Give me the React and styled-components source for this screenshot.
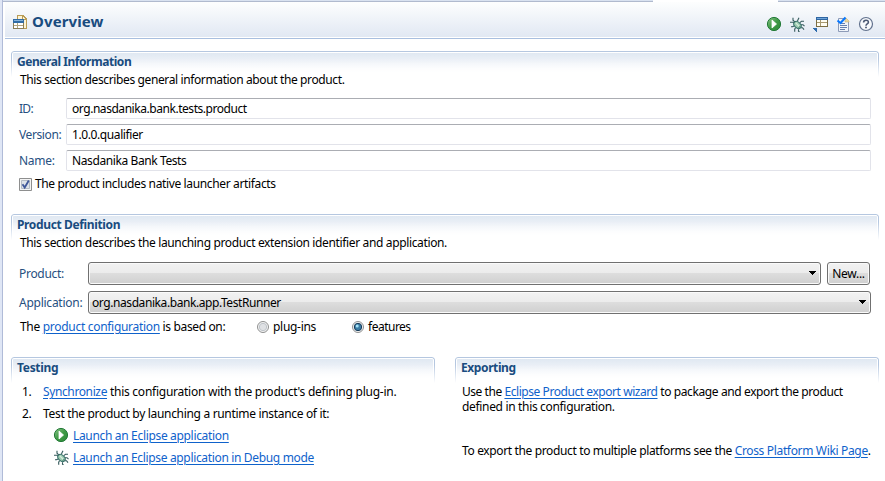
import React from "react";
import styled, { createGlobalStyle } from "styled-components";

const GlobalStyle = createGlobalStyle`
  * { box-sizing: border-box; }
  html, body { margin: 0; padding: 0; background: #fff; overflow: hidden; }
`;

const Editor = styled.div`
  display: flex;
  width: 885px;
  height: 481px;
  overflow: hidden;
  background: #fff;
  color: #000;
  font: 12px/16px "Noto Sans", "Open Sans", sans-serif;
`;

const Gutter = styled.div`
  flex: none;
  width: 3px;
  background: #dfe6f5;
  border-right: 1px solid #b0bbd8;
`;

const Page = styled.main`
  flex: 1;
  min-width: 0;
`;

const TabEdge = styled.div`
  display: flex;
  justify-content: space-between;
  height: 2px;
`;

const TabLine = styled.div`
  width: ${(p) => p.$width}px;
  height: 2px;
  background: #d9e2f0;
  border-bottom: 1px solid #b0bace;
`;

const Header = styled.header`
  display: flex;
  align-items: flex-start;
  height: 37px;
  margin-left: 2px;
  padding: 13px 11px 0 7px;
  background: linear-gradient(#fdfefe, #e1e8f3) 0 0 / 100% 35px no-repeat #fff;
  border-bottom: 1px solid #a9bfdf;
`;

const Title = styled.h1`
  flex: 1;
  margin: -4px 0 0 5px;
  font-size: 15px;
  line-height: 20px;
  font-weight: 700;
  letter-spacing: 0.1px;
  color: #194c7f;
`;

const Tools = styled.div`
  display: flex;
  gap: 7px;
  margin-top: 1px;
`;

const Body = styled.div`
  display: grid;
  grid-template-columns: 424px 424px;
  grid-template-rows: 163px 143px 124px;
  column-gap: 20px;
  padding: 12px 0 0 8px;
`;

const Section = styled.section`
  position: relative;
  grid-column: ${(p) => (p.$wide ? "1 / -1" : "auto")};
  min-width: 0;
`;

const SectionFrame = styled.div`
  position: absolute;
  inset: 0 0 auto 0;
  height: 26px;
  border: 1px solid #b5c7e0;
  border-bottom: 0;
  border-radius: 3px 3px 0 0;
  padding: 1px 1px 0;
  background: linear-gradient(#e0e8f2, #fff 20px) content-box;
  mask-image: linear-gradient(#000 8px, transparent);
`;

const SectionTitle = styled.h2`
  position: relative;
  margin: 0;
  padding: 3px 0 0 6px;
  font-size: 12px;
  line-height: 16px;
  font-weight: 700;
  white-space: nowrap;
  letter-spacing: ${(p) => p.$track ?? -0.3}px;
  color: #194c7f;
`;

const Text = styled.span`
  white-space: nowrap;
  letter-spacing: ${(p) => p.$track ?? -0.3}px;
  color: ${(p) => (p.$label ? "#27507f" : "inherit")};
`;

const Description = styled.p`
  position: relative;
  margin: 0;
  padding: 2px 0 0 9px;
  line-height: 16px;
`;

const Link = styled.a`
  color: #0f62cb;
  text-decoration: underline;
  text-decoration-thickness: 1px;
  text-underline-offset: 2px;
  white-space: nowrap;
  letter-spacing: ${(p) => p.$track ?? -0.3}px;
`;

const Fields = styled.div`
  display: grid;
  grid-template-columns: 47px 805px;
  grid-auto-rows: 21px;
  row-gap: 5px;
  align-items: center;
  padding: 10px 0 0 8px;
`;

const Field = styled.div`
  height: 21px;
  padding: 2px 5px;
  line-height: 16px;
  border: 1px solid #e2e3ea;
  border-top-color: #abadb3;
  border-left-color: #e2e3ea;
  border-radius: 2px;
  background: #fff;
`;

const CheckRow = styled.label`
  display: flex;
  align-items: center;
  gap: 3px;
  margin: 5px 0 0 8px;
  height: 16px;
`;

const Combos = styled.div`
  display: grid;
  grid-template-columns: 69px 733px 6px 44px;
  grid-auto-rows: 23px;
  row-gap: 6px;
  align-items: center;
  padding: 11px 0 0 8px;
`;

const Raised = styled.div`
  display: flex;
  align-items: center;
  height: 23px;
  border: 1px solid #707070;
  border-radius: 3px;
  box-shadow: inset 0 0 0 1px #fafafa;
  background: linear-gradient(#f2f2f2, #ebebeb 50%, #dddddd 50%, #cfcfcf);
`;

const Combo = styled(Raised)`
  grid-column: ${(p) => (p.$wide ? "2 / 5" : "2 / 3")};
  justify-content: space-between;
  padding: 0 3px;
  ${(p) => (p.$wide ? "width: 783px;" : "")}
`;

const Button = styled(Raised)`
  grid-column: 4;
  width: 43px;
  justify-content: center;
`;

const RadioRow = styled.div`
  display: flex;
  align-items: center;
  height: 16px;
  margin: 5px 0 0 9px;
`;

const Sentence = styled.div`
  width: 237px;
  white-space: nowrap;
`;

const Option = styled.label`
  display: flex;
  align-items: center;
  gap: 4px;
  width: ${(p) => p.$width}px;
`;

const Steps = styled.ol`
  display: grid;
  grid-template-columns: 21px auto;
  row-gap: 6px;
  margin: 0;
  padding: 8px 0 0 11px;
  list-style: none;
`;

const Launch = styled.li`
  display: flex;
  grid-column: 2;
  gap: 4px;
  height: 16px;
  padding-left: 10px;

  svg { margin-top: -1px; }
`;

const Paragraph = styled.p`
  margin: 0;
  padding: ${(p) => p.$top}px 0 0 7px;
  line-height: 15px;
  white-space: nowrap;
`;

function RunIcon() {
  return (
    <svg width="16" height="16" viewBox="0 0 16 16">
      <defs>
        <linearGradient id="run" x1="0" y1="0" x2="1" y2="1">
          <stop offset="0" stopColor="#8cc58a" />
          <stop offset=".5" stopColor="#3f9a45" />
          <stop offset="1" stopColor="#2f8b3a" />
        </linearGradient>
      </defs>
      <circle cx="8" cy="8" r="6.6" fill="url(#run)" stroke="#237a38" />
      <path d="M6 4v8l4.5-4z" fill="#fff" stroke="#fff" strokeWidth=".8" />
    </svg>
  );
}

function BugIcon() {
  return (
    <svg width="16" height="16" viewBox="0 0 16 16" fill="none">
      <g transform="translate(.5 .7)">
        <path
          d="M5.5 5.500 3.500 3.500V1M8 4.500 8.500 3 9.500 1M10.500 6 12 4.500h2.500M.5 5.500h3L5 7M5 9l-2 1H1.500M11.500 8h2l1.500 1.500M11.500 11H13l1.500 2M6 11l-.8 1.500V15M9 12.500v2l1 .8"
          stroke="#34595b"
          strokeWidth="1.1"
        />
        <ellipse cx="8" cy="8.3" rx="4.2" ry="2.900" transform="rotate(43 8 8.3)" fill="#9ccbb0" stroke="#356e68" />
        <path d="M6.300 6.200 9.600 9.500" stroke="#d6eddd" strokeWidth="1.3" />
        <path d="M9 11.300 11 9.200" stroke="#447b6d" />
      </g>
    </svg>
  );
}

function PageIcon() {
  return (
    <svg width="15" height="15" viewBox="0 0 15 15" shapeRendering="crispEdges">
      <path d="M5 1h6l3 3v10H5z" fill="#fdf3d3" />
      <path d="M5.500 4V.5h5.500M11 .5l3.500 3.500v9.500h-3.500M10.500 1v3.500h4" fill="none" stroke="#b99c55" />
      <path d="M1.500 4.500h10v9h-10z" fill="#fff" stroke="#8b7d56" />
      <path d="M1 4h11v4H1z" fill="#316ca5" />
      <path d="M2 5h9v1H2z" fill="#86b3dc" />
      <path d="M2 10.500h9M5.500 8v5" stroke="#b3a57f" />
    </svg>
  );
}

function LayoutIcon() {
  return (
    <svg width="16" height="16" viewBox="0 0 16 16" shapeRendering="crispEdges">
      <g transform="translate(1 1)">
        <path d="M3.500 .5h11v9h-11z" fill="#fffdf2" stroke="#7c6d42" />
        <path d="M3 0h12v3H3z" fill="#2e66a3" />
        <path d="M4 1h10v1H4z" fill="#70a4d8" />
        <path d="M4 5.500h10M7.500 3v6" stroke="#a89970" />
        <path d="M0 11h4v4H3v-1H2v-1H1v-1H0z" fill="#2f6cad" />
      </g>
    </svg>
  );
}

function ChecklistIcon() {
  return (
    <svg width="16" height="16" viewBox="0 0 16 16">
      <path d="M3.500 2.500h7l3 3v10h-10z" fill="#f0f4fa" stroke="#8d9bb8" />
      <path d="M10 2h1l3 3v1h-4z" fill="#e9d59d" stroke="#bda96e" strokeWidth=".5" />
      <path d="M5 7.500h5M5 9.500h7M5 11.500h7M5 13.500h5" stroke="#6680ac" />
      <path d="M2.500 4.500 5.500 7 10.500 1.500" fill="none" stroke="#0878ff" strokeWidth="2" />
    </svg>
  );
}

function HelpIcon() {
  return (
    <svg width="16" height="16" viewBox="0 0 16 16" fill="none">
      <circle cx="8" cy="8" r="6.500" fill="#f7f9fc" stroke="#62728e" strokeWidth="1.200" />
      <path d="M5.600 6.500C5.600 3.500 10.400 3.600 10.400 6.200c0 1.800-2.400 1.700-2.400 3.500" stroke="#4b5873" strokeWidth="1.600" />
      <path d="M7.100 10.700h1.800v1.600H7.100z" fill="#4b5873" />
    </svg>
  );
}

function CheckBox() {
  return (
    <svg width="13" height="13" viewBox="0 0 13 13">
      <path d="M.5 .5h12v12H.5z" fill="#f4f4f4" stroke="#8e8f8f" />
      <path d="M2.500 2.500h8v8h-8z" fill="#dde2e8" stroke="#b5bcc5" />
      <path d="M3.500 6.200 5.700 9.500 9.800 2.500" fill="none" stroke="#3f5799" strokeWidth="1.800" />
    </svg>
  );
}

function Radio({ checked }) {
  return (
    <svg width="12" height="12" viewBox="0 0 12 12">
      <circle cx="6" cy="6" r="5.500" fill="#f5f5f5" stroke="#8e8f8f" />
      <circle cx="6" cy="6" r="3.700" fill={checked ? "#3b7da5" : "#dfe1e4"} stroke={checked ? "#173a58" : "#bfc4c9"} />
      {checked && <circle cx="5.200" cy="5" r="1.500" fill="#a5e3f8" />}
    </svg>
  );
}

function Arrow() {
  return (
    <svg width="9" height="5" viewBox="0 0 9 5" shapeRendering="crispEdges">
      <path d="M1 0h7v1H7v1H6v1H5v1H4V3H3V2H2V1H1z" fill="#000" />
    </svg>
  );
}

export default function App() {
  return (
    <Editor>
      <GlobalStyle />
      <Gutter />
      <Page>
        <TabEdge>
          <TabLine $width={650} />
          <TabLine $width={107} />
        </TabEdge>
        <Header>
          <PageIcon />
          <Title>Overview</Title>
          <Tools>
            <RunIcon />
            <BugIcon />
            <LayoutIcon />
            <ChecklistIcon />
            <HelpIcon />
          </Tools>
        </Header>
        <Body>
          <Section $wide>
            <SectionFrame />
            <SectionTitle $track={-0.45}>General Information</SectionTitle>
            <Description>
              <Text $track={-0.38}>This section describes general information about the product.</Text>
            </Description>
            <Fields>
              <Text $label $track={-0.7}>ID:</Text>
              <Field><Text $track={-0.45}>org.nasdanika.bank.tests.product</Text></Field>
              <Text $label $track={-0.4}>Version:</Text>
              <Field><Text $track={-0.4}>1.0.0.qualifier</Text></Field>
              <Text $label>Name:</Text>
              <Field><Text $track={-0.4}>Nasdanika Bank Tests</Text></Field>
            </Fields>
            <CheckRow>
              <CheckBox />
              <Text $track={-0.36}>The product includes native launcher artifacts</Text>
            </CheckRow>
          </Section>
          <Section $wide>
            <SectionFrame />
            <SectionTitle $track={-0.36}>Product Definition</SectionTitle>
            <Description>
              <Text $track={-0.36}>This section describes the launching product extension identifier and application.</Text>
            </Description>
            <Combos>
              <Text $label>Product:</Text>
              <Combo><span /><Arrow /></Combo>
              <Button><Text>New...</Text></Button>
              <Text $label $track={-0.25}>Application:</Text>
              <Combo $wide><Text $track={-0.42}>org.nasdanika.bank.app.TestRunner</Text><Arrow /></Combo>
            </Combos>
            <RadioRow>
              <Sentence>
                <Text>The </Text><Link>product configuration</Link><Text $track={-0.36}> is based on:</Text>
              </Sentence>
              <Option $width={95}><Radio /><Text>plug-ins</Text></Option>
              <Option $width={95}><Radio checked /><Text $track={-0.5}>features</Text></Option>
            </RadioRow>
          </Section>
          <Section>
            <SectionFrame />
            <SectionTitle>Testing</SectionTitle>
            <Steps>
              <Text>1.</Text>
              <li><Link $track={-0.38}>Synchronize</Link><Text $track={-0.25}> this configuration with the product's defining plug-in.</Text></li>
              <Text>2.</Text>
              <li><Text $track={-0.32}>Test the product by launching a runtime instance of it:</Text></li>
              <Launch><RunIcon /><Link $track={-0.33}>Launch an Eclipse application</Link></Launch>
              <Launch><BugIcon /><Link $track={-0.34}>Launch an Eclipse application in Debug mode</Link></Launch>
            </Steps>
          </Section>
          <Section>
            <SectionFrame />
            <SectionTitle $track={-0.4}>Exporting</SectionTitle>
            <Paragraph $top={8}>
              <Text $track={-0.45}>Use the </Text><Link $track={-0.44}>Eclipse Product export wizard</Link><Text $track={-0.39}> to package and export the product</Text>
              <br />
              <Text $track={-0.33}>defined in this configuration.</Text>
            </Paragraph>
            <Paragraph $top={29}>
              <Text $track={-0.36}>To export the product to multiple platforms see the </Text><Link $track={-0.34}>Cross Platform Wiki Page</Link><Text>.</Text>
            </Paragraph>
          </Section>
        </Body>
      </Page>
    </Editor>
  );
}
